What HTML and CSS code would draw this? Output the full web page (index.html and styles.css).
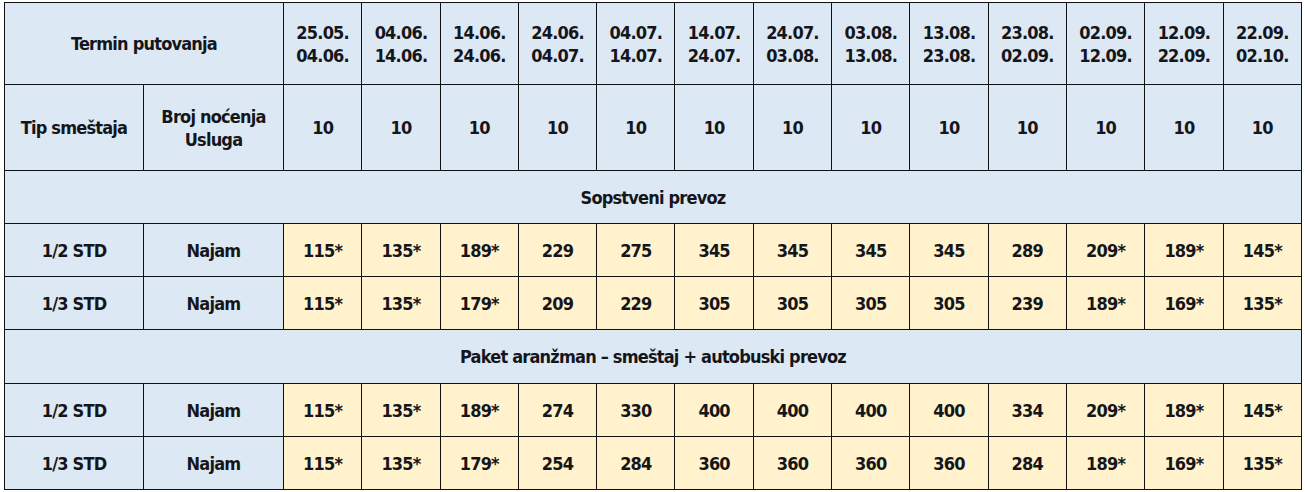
FILE: index.html
```html
<!DOCTYPE html>
<html lang="sr">
<head>
<meta charset="utf-8">
<title>Cenovnik</title>
<link rel="stylesheet" href="styles.css">
</head>
<body>
<table class="prices">
  <colgroup>
    <col class="c-type"><col class="c-svc">
    <col><col><col><col><col><col><col><col><col><col><col><col><col>
  </colgroup>
  <tbody>
    <tr class="r-dates">
      <td class="hd" colspan="2">Termin putovanja</td>
      <td class="hd">25.05.<br>04.06.</td>
      <td class="hd">04.06.<br>14.06.</td>
      <td class="hd">14.06.<br>24.06.</td>
      <td class="hd">24.06.<br>04.07.</td>
      <td class="hd">04.07.<br>14.07.</td>
      <td class="hd">14.07.<br>24.07.</td>
      <td class="hd">24.07.<br>03.08.</td>
      <td class="hd">03.08.<br>13.08.</td>
      <td class="hd">13.08.<br>23.08.</td>
      <td class="hd">23.08.<br>02.09.</td>
      <td class="hd">02.09.<br>12.09.</td>
      <td class="hd">12.09.<br>22.09.</td>
      <td class="hd">22.09.<br>02.10.</td>
    </tr>
    <tr class="r-nights">
      <td class="hd">Tip smeštaja</td>
      <td class="hd">Broj noćenja<br>Usluga</td>
      <td class="hd">10</td><td class="hd">10</td><td class="hd">10</td><td class="hd">10</td>
      <td class="hd">10</td><td class="hd">10</td><td class="hd">10</td><td class="hd">10</td>
      <td class="hd">10</td><td class="hd">10</td><td class="hd">10</td><td class="hd">10</td>
      <td class="hd">10</td>
    </tr>
    <tr class="r-section">
      <td class="hd" colspan="15">Sopstveni prevoz</td>
    </tr>
    <tr class="r-data">
      <td class="hd">1/2 STD</td><td class="hd">Najam</td>
      <td class="pr">115*</td><td class="pr">135*</td><td class="pr">189*</td><td class="pr">229</td>
      <td class="pr">275</td><td class="pr">345</td><td class="pr">345</td><td class="pr">345</td>
      <td class="pr">345</td><td class="pr">289</td><td class="pr">209*</td><td class="pr">189*</td>
      <td class="pr">145*</td>
    </tr>
    <tr class="r-data">
      <td class="hd">1/3 STD</td><td class="hd">Najam</td>
      <td class="pr">115*</td><td class="pr">135*</td><td class="pr">179*</td><td class="pr">209</td>
      <td class="pr">229</td><td class="pr">305</td><td class="pr">305</td><td class="pr">305</td>
      <td class="pr">305</td><td class="pr">239</td><td class="pr">189*</td><td class="pr">169*</td>
      <td class="pr">135*</td>
    </tr>
    <tr class="r-section r-section2">
      <td class="hd" colspan="15">Paket aranžman – smeštaj + autobuski prevoz</td>
    </tr>
    <tr class="r-data">
      <td class="hd">1/2 STD</td><td class="hd">Najam</td>
      <td class="pr">115*</td><td class="pr">135*</td><td class="pr">189*</td><td class="pr">274</td>
      <td class="pr">330</td><td class="pr">400</td><td class="pr">400</td><td class="pr">400</td>
      <td class="pr">400</td><td class="pr">334</td><td class="pr">209*</td><td class="pr">189*</td>
      <td class="pr">145*</td>
    </tr>
    <tr class="r-data">
      <td class="hd">1/3 STD</td><td class="hd">Najam</td>
      <td class="pr">115*</td><td class="pr">135*</td><td class="pr">179*</td><td class="pr">254</td>
      <td class="pr">284</td><td class="pr">360</td><td class="pr">360</td><td class="pr">360</td>
      <td class="pr">360</td><td class="pr">284</td><td class="pr">189*</td><td class="pr">169*</td>
      <td class="pr">135*</td>
    </tr>
  </tbody>
</table>
</body>
</html>
```

FILE: styles.css
```css
html, body {
  margin: 0;
  padding: 0;
  background: #ffffff;
}

body {
  padding: 2px 3px 0 4px;
  font-family: "DejaVu Sans Condensed", "DejaVu Sans", sans-serif;
  font-weight: bold;
  font-size: 18px;
  letter-spacing: -0.8px;
  color: #15161a;
}

.prices {
  width: 1298px;
  border-collapse: collapse;
  table-layout: fixed;
}

.c-type { width: 139px; }
.c-svc { width: 140px; }

.prices td {
  border: 1px solid #111;
  text-align: center;
  vertical-align: middle;
  padding: 0;
  line-height: 23px;
}

.hd { background: #dde8f5; }
.pr { background: #fff2cc; }

.r-dates td { height: 81px; }
.r-nights td { height: 85px; }
.r-section td { height: 52px; }
.r-section2 td { height: 53px; }
.r-data td { height: 52px; }
```
